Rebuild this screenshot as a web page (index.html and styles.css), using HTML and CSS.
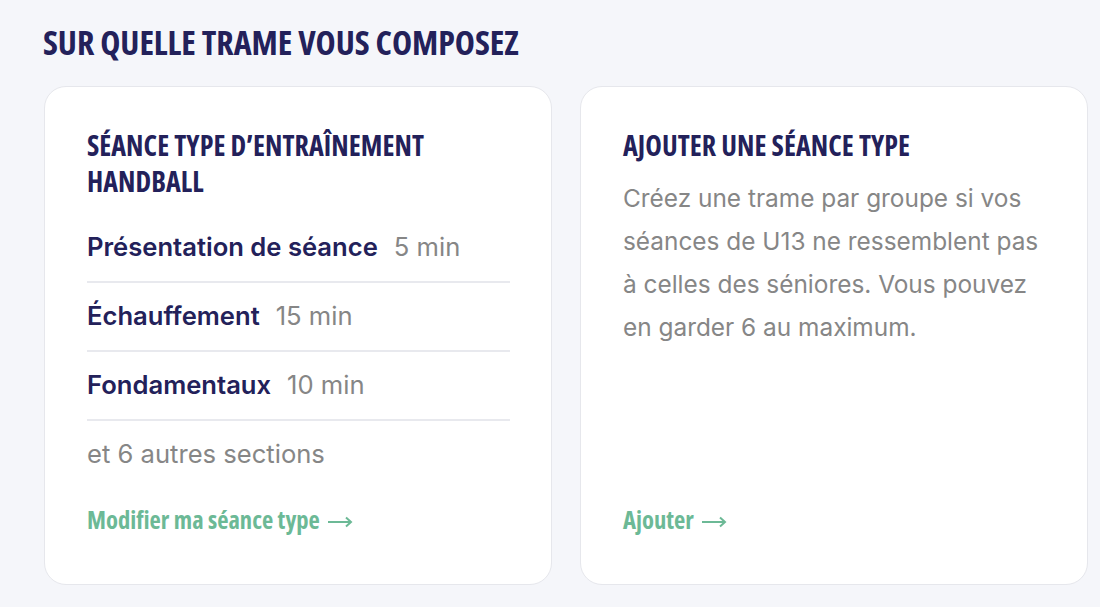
FILE: index.html
```html
<!DOCTYPE html>
<html lang="fr">
<head>
    <meta charset="UTF-8">
    <meta name="viewport" content="width=device-width, initial-scale=1.0">
    <title>Séances types</title>
    <link rel="stylesheet" href="styles.css">
</head>
<body>
    <section class="templates">
        <h1 class="templates-title">Sur quelle trame vous composez</h1>
        <div class="templates-grid">
            <article class="card">
                <h2 class="card-title">Séance type d’entraînement handball</h2>
                <ul class="section-list">
                    <li class="section-item">
                        <span class="section-name">Présentation de séance</span>
                        <span class="section-time">5 min</span>
                    </li>
                    <li class="section-item">
                        <span class="section-name">Échauffement</span>
                        <span class="section-time">15 min</span>
                    </li>
                    <li class="section-item">
                        <span class="section-name">Fondamentaux</span>
                        <span class="section-time">10 min</span>
                    </li>
                    <li class="section-item section-more">et 6 autres sections</li>
                </ul>
                <a class="card-link" href="#">
                    Modifier ma séance type
                    <svg class="arrow" width="26" height="12" viewBox="0 0 26 12" aria-hidden="true">
                        <path d="M1 6h23M19 1.5l5 4.5-5 4.5" fill="none" stroke="currentColor" stroke-width="2"/>
                    </svg>
                </a>
            </article>
            <article class="card">
                <h2 class="card-title">Ajouter une séance type</h2>
                <p class="card-text">Créez une trame par groupe si vos séances de U13 ne ressemblent pas à celles des séniores. Vous pouvez en garder 6 au maximum.</p>
                <a class="card-link" href="#">
                    Ajouter
                    <svg class="arrow" width="26" height="12" viewBox="0 0 26 12" aria-hidden="true">
                        <path d="M1 6h23M19 1.5l5 4.5-5 4.5" fill="none" stroke="currentColor" stroke-width="2"/>
                    </svg>
                </a>
            </article>
        </div>
    </section>
</body>
</html>
```

FILE: styles.css
```css
body {
    margin: 0;
    padding: 0;
    background-color: #f5f6fa;
    font-family: Inter, "Noto Sans", sans-serif;
    color: #23215a;
}

.templates {
    padding: 22px 12px 22px 44px;
}

/* condensed display face for titles and links */
.templates-title,
.card-title,
.card-link {
    font-family: "Open Sans", sans-serif;
    font-stretch: 75%;
    font-weight: 700;
    text-transform: uppercase;
}

.templates-title {
    margin: 0 0 24px -1px;
    font-size: 34px;
    line-height: 40px;
    letter-spacing: -0.06px;
}

.templates-grid {
    display: grid;
    grid-template-columns: 508px 508px;
    gap: 28px;
}

.card {
    display: flex;
    flex-direction: column;
    height: 499px;
    box-sizing: border-box;
    padding: 40px 41px 49px 42px;
    background-color: #fff;
    border: 1px solid #e6e7ec;
    border-radius: 22px;
}

.card-title {
    margin: 0;
    font-size: 28px;
    line-height: 36px;
    letter-spacing: 0.06px;
}

.section-list {
    list-style: none;
    margin: 15px 0 0;
    padding: 0;
}

.section-item {
    display: flex;
    align-items: baseline;
    gap: 16px;
    padding: 18px 0 19px;
    border-bottom: 2px solid #e8e9ee;
    font-size: 25.6px;
    line-height: 30px;
}

.section-name {
    font-weight: 600;
}

.section-time {
    color: #868686;
}

.section-more {
    border-bottom: none;
    color: #868686;
}

.card-text {
    margin: 14px 0 0;
    font-size: 24.4px;
    line-height: 43px;
    color: #868686;
}

.card-link {
    display: flex;
    align-items: center;
    gap: 7px;
    margin-top: auto;
    font-size: 24.6px;
    line-height: 30px;
    text-transform: none;
    color: #6cb996;
    text-decoration: none;
}

.arrow {
    margin-top: 3px;
}
```
